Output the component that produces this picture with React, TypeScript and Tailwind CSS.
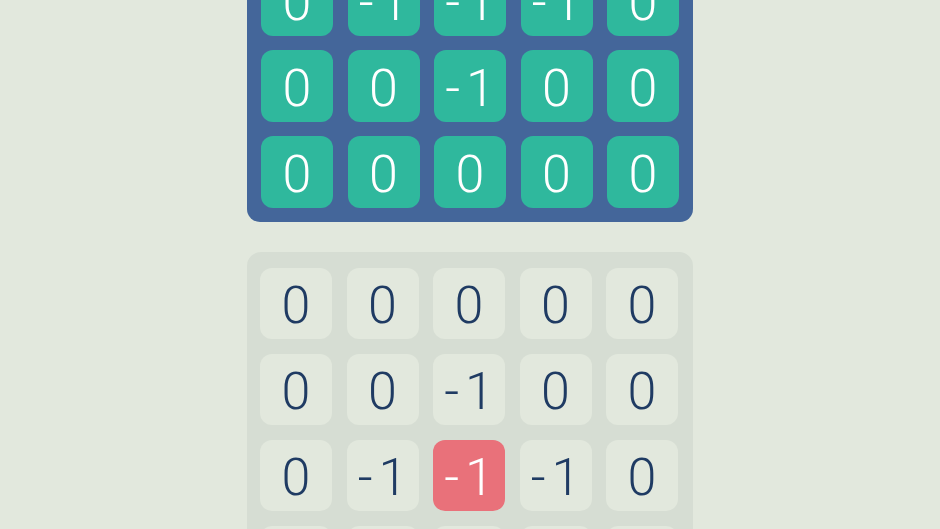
import React from "react";

const top = [
  ["0", "-1", "-1", "-1", "0"],
  ["0", "0", "-1", "0", "0"],
  ["0", "0", "0", "0", "0"],
];
const bottom = [
  ["0", "0", "0", "0", "0"],
  ["0", "0", "-1", "0", "0"],
  ["0", "-1", "-1", "-1", "0"],
  ["0", "0", "0", "0", "0"],
];

function Val({ v }: { v: string }) {
  if (v === "-1") {
    return (
      <span className="flex items-baseline">
        <span className="mr-[6px]">-</span>
        <span>1</span>
      </span>
    );
  }
  return <span>{v}</span>;
}

export default function App() {
  return (
    <div
      className="w-[940px] h-[529px] overflow-hidden bg-[#e2e8dd]"
      style={{ fontFamily: "Roboto, 'Open Sans', sans-serif" }}
    >
      <div className="w-[446px] mx-auto mt-[-50px] flex flex-col gap-[30px]">
        <div className="bg-[#44669a] rounded-[13px] p-[14px] flex flex-col gap-[14px]">
          {top.map((row, r) => (
            <div key={r} className="flex gap-[14.5px]">
              {row.map((v, c) => (
                <div
                  key={c}
                  className="w-[72px] h-[72px] rounded-[12px] bg-[#2fb89d] text-white text-[52px] font-light leading-none flex items-center justify-center pt-[5px]"
                >
                  <Val v={v} />
                </div>
              ))}
            </div>
          ))}
        </div>
        <div className="bg-[#d6ddd3] rounded-[14px] px-[13px] py-[16px] flex flex-col gap-[15px]">
          {bottom.map((row, r) => (
            <div key={r} className="flex gap-[14.5px]">
              {row.map((v, c) => {
                const red = r === 2 && c === 2;
                return (
                  <div
                    key={c}
                    className={
                      red
                        ? "w-[72px] h-[71px] rounded-[12px] bg-[#e9717a] text-white text-[52px] font-light leading-none flex items-center justify-center pt-[5px]"
                        : "w-[72px] h-[71px] rounded-[12px] bg-[#e2e8dd] text-[#1f3b63] text-[52px] font-light leading-none flex items-center justify-center pt-[5px]"
                    }
                  >
                    <Val v={v} />
                  </div>
                );
              })}
            </div>
          ))}
        </div>
      </div>
    </div>
  );
}
